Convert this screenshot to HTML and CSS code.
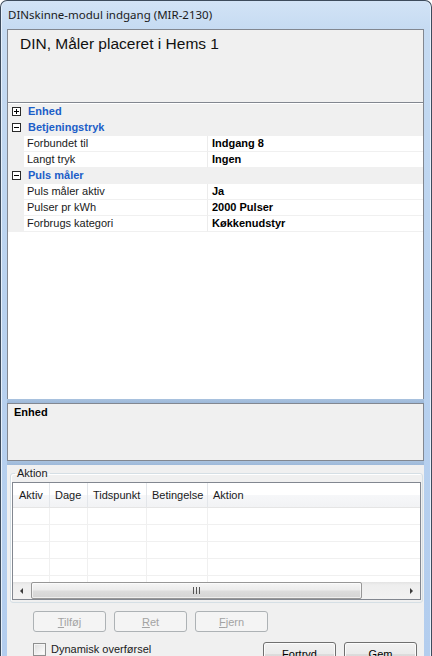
FILE: index.html
```html
<!DOCTYPE html>
<html lang="da">
<head>
<meta charset="utf-8">
<title>DINskinne-modul indgang</title>
<link rel="stylesheet" href="styles.css">
</head>
<body>
<div class="window">
  <div class="titlebar">DINskinne-modul indgang (MIR-2130)</div>
  <div class="client">
    <div class="header">DIN, Måler placeret i Hems 1</div>
    <div class="grid">
      <div class="cat"><span class="margin"><span class="exp plus"></span></span><span class="cat-name">Enhed</span></div>
      <div class="cat"><span class="margin"><span class="exp"></span></span><span class="cat-name">Betjeningstryk</span></div>
      <div class="prop"><span class="margin"></span><span class="pname">Forbundet til</span><span class="pval">Indgang 8</span></div>
      <div class="prop"><span class="margin"></span><span class="pname">Langt tryk</span><span class="pval">Ingen</span></div>
      <div class="cat"><span class="margin"><span class="exp"></span></span><span class="cat-name">Puls måler</span></div>
      <div class="prop"><span class="margin"></span><span class="pname">Puls måler aktiv</span><span class="pval">Ja</span></div>
      <div class="prop"><span class="margin"></span><span class="pname">Pulser pr kWh</span><span class="pval">2000 Pulser</span></div>
      <div class="prop"><span class="margin"></span><span class="pname">Forbrugs kategori</span><span class="pval">Køkkenudstyr</span></div>
    </div>
    <div class="splitter"></div>
    <div class="help"><span class="help-title">Enhed</span></div>
    <div class="splitter"></div>
    <div class="lower">
      <fieldset class="group">
        <legend>Aktion</legend>
        <div class="list">
          <div class="lhead">
            <span class="col c1">Aktiv</span>
            <span class="col c2">Dage</span>
            <span class="col c3">Tidspunkt</span>
            <span class="col c4">Betingelse</span>
            <span class="col c5">Aktion</span>
          </div>
          <div class="lrows">
            <div class="lrow"><span class="cell c1"></span><span class="cell c2"></span><span class="cell c3"></span><span class="cell c4"></span><span class="cell c5"></span></div>
            <div class="lrow"><span class="cell c1"></span><span class="cell c2"></span><span class="cell c3"></span><span class="cell c4"></span><span class="cell c5"></span></div>
            <div class="lrow"><span class="cell c1"></span><span class="cell c2"></span><span class="cell c3"></span><span class="cell c4"></span><span class="cell c5"></span></div>
            <div class="lrow"><span class="cell c1"></span><span class="cell c2"></span><span class="cell c3"></span><span class="cell c4"></span><span class="cell c5"></span></div>
            <div class="lrow"><span class="cell c1"></span><span class="cell c2"></span><span class="cell c3"></span><span class="cell c4"></span><span class="cell c5"></span></div>
          </div>
          <div class="hscroll">
            <span class="sarrow"><span class="tri-left"></span></span>
            <span class="track"><span class="thumb"><span class="grip"></span></span></span>
            <span class="sarrow"><span class="tri-right"></span></span>
          </div>
        </div>
      </fieldset>
      <div class="btnrow">
        <button class="btn" disabled><u>T</u>ilføj</button>
        <button class="btn" disabled><u>R</u>et</button>
        <button class="btn" disabled><u>F</u>jern</button>
      </div>
      <div class="bottomrow">
        <label class="chk"><span class="box"></span>Dynamisk overførsel</label>
        <div class="actions">
          <button class="btn primary">Fortryd</button>
          <button class="btn primary">Gem</button>
        </div>
      </div>
    </div>
  </div>
</div>
</body>
</html>
```

FILE: styles.css
```css
html, body {
  margin: 0;
  padding: 0;
  width: 432px;
  height: 656px;
  overflow: hidden;
  background: #ffffff;
}

body {
  font-family: "Liberation Sans", Arial, sans-serif;
  font-size: 11px;
  color: #000;
}

.window {
  box-sizing: border-box;
  width: 432px;
  height: 656px;
  border: 1px solid #3d4b5c;
  border-bottom: none;
  border-radius: 7px 7px 0 0;
  background: linear-gradient(180deg, #d2e3f6 0px, #c6dbf2 28px, #b9d2ef 300px, #b3cdee 656px);
  box-shadow: inset 1px 0 0 #e6f0fb, inset -1px 0 0 #e6f0fb;
  padding: 0 7px 0 6px;
  display: flex;
  flex-direction: column;
  overflow: hidden;
}

.titlebar {
  height: 28px;
  flex: none;
  line-height: 27px;
  padding-left: 1px;
  font-family: "Noto Sans", "Open Sans", sans-serif;
  font-size: 11.5px;
  color: #1b1b1b;
  white-space: nowrap;
}

.client {
  flex: 1;
  background: #f0f0f0;
  display: flex;
  flex-direction: column;
  min-height: 0;
  overflow: hidden;
}

.header {
  box-sizing: border-box;
  height: 74px;
  flex: none;
  border: 1px solid #828790;
  padding: 5px 0 0 12px;
  font-size: 15.5px;
  line-height: 18px;
  color: #111;
}

.grid {
  box-sizing: border-box;
  height: 296px;
  flex: none;
  border-left: 1px solid #828790;
  border-right: 1px solid #828790;
  background: #ffffff;
  padding-top: 1px;
}

.cat, .prop {
  display: flex;
  height: 16px;
  line-height: 15px;
}

.cat {
  background: #f0f0f0;
}

.margin {
  width: 16px;
  flex: none;
  background: #f0f0f0;
  position: relative;
}

.exp {
  position: absolute;
  left: 4px;
  top: 3px;
  box-sizing: border-box;
  width: 9px;
  height: 9px;
  border: 1px solid #2a2a2a;
  background: #ffffff;
}

.exp::before {
  content: "";
  position: absolute;
  left: 1px;
  top: 3px;
  width: 5px;
  height: 1px;
  background: #000;
}

.exp.plus::after {
  content: "";
  position: absolute;
  left: 3px;
  top: 1px;
  width: 1px;
  height: 5px;
  background: #000;
}

.cat-name {
  padding-left: 4px;
  font-weight: bold;
  color: #1c5ec8;
}

.pname {
  box-sizing: border-box;
  width: 184px;
  flex: none;
  padding-left: 3px;
  border-right: 1px solid #ececec;
  border-bottom: 1px solid #f0f0f0;
  color: #1a1a1a;
}

.pval {
  flex: 1;
  padding-left: 4px;
  font-weight: bold;
  border-bottom: 1px solid #f0f0f0;
}

.splitter {
  height: 4px;
  flex: none;
  background: linear-gradient(180deg, #a9c2df, #9db8d9);
}

.help {
  box-sizing: border-box;
  height: 58px;
  flex: none;
  border: 1px solid #828790;
  padding: 2px 6px;
  line-height: 13px;
}

.help-title {
  font-weight: bold;
}

.lower {
  flex: none;
  display: flex;
  flex-direction: column;
  padding-top: 1px;
}

.group {
  margin: 0 1px 0 3px;
  padding: 0 1px 2px 1px;
  border: 1px solid #d5dfe5;
  border-radius: 3px;
  box-shadow: inset 1px 1px 0 #ffffff;
  min-width: 0;
}

.group legend {
  padding: 0 2px;
  margin-left: 3px;
  line-height: 14px;
  color: #1a1a1a;
}

.list {
  margin-top: 2px;
  box-sizing: border-box;
  height: 118px;
  border: 1px solid #828790;
  background: #ffffff;
  display: flex;
  flex-direction: column;
}

.lhead {
  display: flex;
  height: 25px;
  flex: none;
  box-sizing: border-box;
  border-bottom: 1px solid #e5e5e5;
  background: linear-gradient(180deg, #ffffff 0%, #ffffff 50%, #f6f7f9 51%, #f2f3f5 100%);
  line-height: 24px;
  color: #1a1a1a;
}

.col {
  box-sizing: border-box;
  padding-left: 5px;
  border-right: 1px solid #e3e6ea;
  white-space: nowrap;
}

.c1 { width: 37px; flex: none; }
.c2 { width: 38px; flex: none; }
.c3 { width: 59px; flex: none; }
.c4 { width: 61px; flex: none; }
.c5 { flex: 1; border-right: none; }

.lhead .c1 { padding-left: 6px; }

.lrows {
  flex: 1;
  overflow: hidden;
}

.lrow {
  display: flex;
  height: 17px;
  box-sizing: border-box;
  border-bottom: 1px solid #f0f0f0;
}

.cell {
  box-sizing: border-box;
  border-right: 1px solid #f0f0f0;
}

.lrow .c5 {
  border-right: none;
}

.hscroll {
  height: 17px;
  flex: none;
  display: flex;
  background: linear-gradient(180deg, #e3e3e3 0, #eeeeee 3px, #f2f2f2 100%);
}

.sarrow {
  width: 17px;
  flex: none;
  display: flex;
  align-items: center;
  justify-content: center;
}

.tri-left {
  width: 0;
  height: 0;
  border-top: 3px solid transparent;
  border-bottom: 3px solid transparent;
  border-right: 3px solid #3c3c3c;
}

.tri-right {
  width: 0;
  height: 0;
  border-top: 3px solid transparent;
  border-bottom: 3px solid transparent;
  border-left: 3px solid #3c3c3c;
}

.track {
  flex: 1;
  padding: 0 1px;
  display: flex;
}

.thumb {
  width: 331px;
  box-sizing: border-box;
  border: 1px solid #979797;
  border-radius: 2px;
  background: linear-gradient(180deg, #f6f6f6 0%, #ececec 45%, #dcdcdc 55%, #d4d4d4 100%);
  box-shadow: inset 0 0 0 1px rgba(255,255,255,0.6);
  display: flex;
  align-items: center;
  justify-content: center;
}

.grip {
  width: 7px;
  height: 7px;
  background: repeating-linear-gradient(90deg, #555 0, #555 1px, transparent 1px, transparent 3px);
}

.btnrow {
  display: flex;
  gap: 8px;
  padding-left: 26px;
  margin-top: 8px;
}

.btn {
  box-sizing: border-box;
  width: 73px;
  height: 21px;
  padding: 0;
  font-family: "Liberation Sans", Arial, sans-serif;
  font-size: 11px;
  border-radius: 3px;
}

.btn[disabled] {
  border: 1px solid #adb2b5;
  background: #f4f4f4;
  color: #a3a3a3;
}

.btn.primary {
  height: 23px;
  border: 1px solid #707070;
  background: linear-gradient(180deg, #f2f2f2 0%, #ebebeb 50%, #dddddd 51%, #cfcfcf 100%);
  box-shadow: inset 0 0 0 1px #fcfcfc;
  color: #000;
}

.bottomrow {
  display: flex;
  justify-content: space-between;
  align-items: flex-start;
  margin-top: 10px;
  padding: 0 7px 0 26px;
}

.chk {
  display: flex;
  align-items: center;
  gap: 5px;
  height: 13px;
  margin-top: 1px;
  line-height: 13px;
  color: #1a1a1a;
}

.box {
  box-sizing: border-box;
  width: 13px;
  height: 13px;
  border: 1px solid #8e8f8f;
  background: linear-gradient(135deg, #dcdcdc 0%, #f2f2f2 60%, #ffffff 100%);
  box-shadow: inset 0 0 0 1px #f4f4f4;
}

.actions {
  display: flex;
  gap: 8px;
}
```
